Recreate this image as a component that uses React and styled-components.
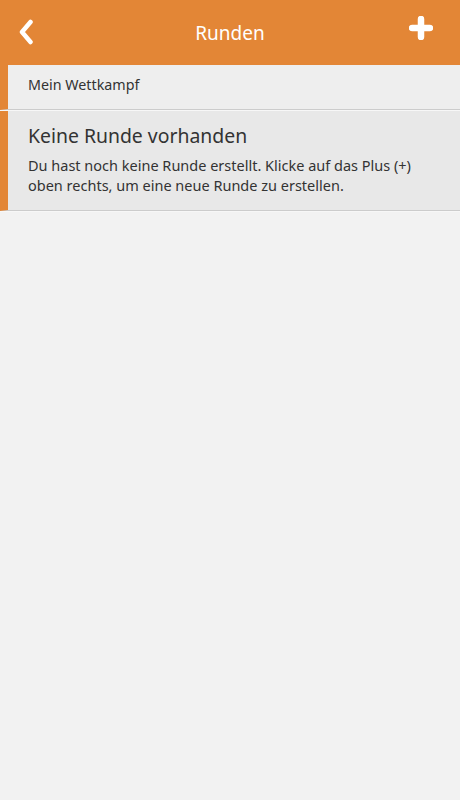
import React from "react";
import styled, { createGlobalStyle } from "styled-components";

const Global = createGlobalStyle`
  html, body { margin: 0; padding: 0; background: #f2f2f2; }
  body { font-family: "Noto Sans", "Open Sans", sans-serif; }
  #root { min-height: 800px; background: #f2f2f2; }
`;

const Header = styled.header`
  height: 65px;
  background: #e38636;
  display: grid;
  grid-template-columns: 65px 1fr 65px;
  align-items: center;
`;

const IconButton = styled.button`
  border: 0;
  background: transparent;
  height: 65px;
  display: flex;
  align-items: center;
  justify-content: ${(p) => (p.$right ? "flex-end" : "flex-start")};
  padding: ${(p) => (p.$right ? "0 27px 9px 0" : "0 0 2px 18px")};
  cursor: pointer;
`;

const Title = styled.h1`
  margin: 0;
  text-align: center;
  color: #fff;
  font-size: 19px;
  font-weight: 400;
  line-height: 24px;
`;

const List = styled.div`
  display: flex;
  flex-direction: column;
`;

const Item = styled.div`
  background: ${(p) => p.$bg};
  border-left: 8px solid #e38636;
  border-bottom: 1px solid #cccccc;
  box-shadow: 0 1px 0 #f7f7f7;
  margin-bottom: 1px;
  padding: ${(p) => p.$pad};
  color: #333;
`;

const ItemLabel = styled.div`
  font-size: 14.3px;
  line-height: 20px;
  color: #333;
`;

const ItemHeading = styled.div`
  font-size: 19.4px;
  line-height: 26px;
  color: #333;
  margin-bottom: 6px;
`;

const ItemText = styled.p`
  margin: 0;
  font-size: 14.5px;
  line-height: 20px;
  color: #333;
`;

const Back = () => (
  <svg width="18" height="26" viewBox="0 0 18 26">
    <path d="M12.5 3 L4 13 L12.5 23" fill="none" stroke="#fff" strokeWidth="4.5" strokeLinecap="round" strokeLinejoin="round" />
  </svg>
);

const Plus = () => (
  <svg width="24" height="24" viewBox="0 0 24 24">
    <path d="M12 3 V21 M3 12 H21" fill="none" stroke="#fff" strokeWidth="6.5" strokeLinecap="round" />
  </svg>
);

export default function App() {
  return (
    <>
      <Global />
      <Header>
        <IconButton aria-label="Zurück"><Back /></IconButton>
        <Title>Runden</Title>
        <IconButton $right aria-label="Neue Runde"><Plus /></IconButton>
      </Header>
      <List>
        <Item $bg="#eeeeee" $pad="10px 20px 14px">
          <ItemLabel>Mein Wettkampf</ItemLabel>
        </Item>
        <Item $bg="#e8e8e8" $pad="12px 20px 15px">
          <ItemHeading>Keine Runde vorhanden</ItemHeading>
          <ItemText>
            Du hast noch keine Runde erstellt. Klicke auf das Plus (+) oben rechts, um eine neue Runde zu erstellen.
          </ItemText>
        </Item>
      </List>
    </>
  );
}
